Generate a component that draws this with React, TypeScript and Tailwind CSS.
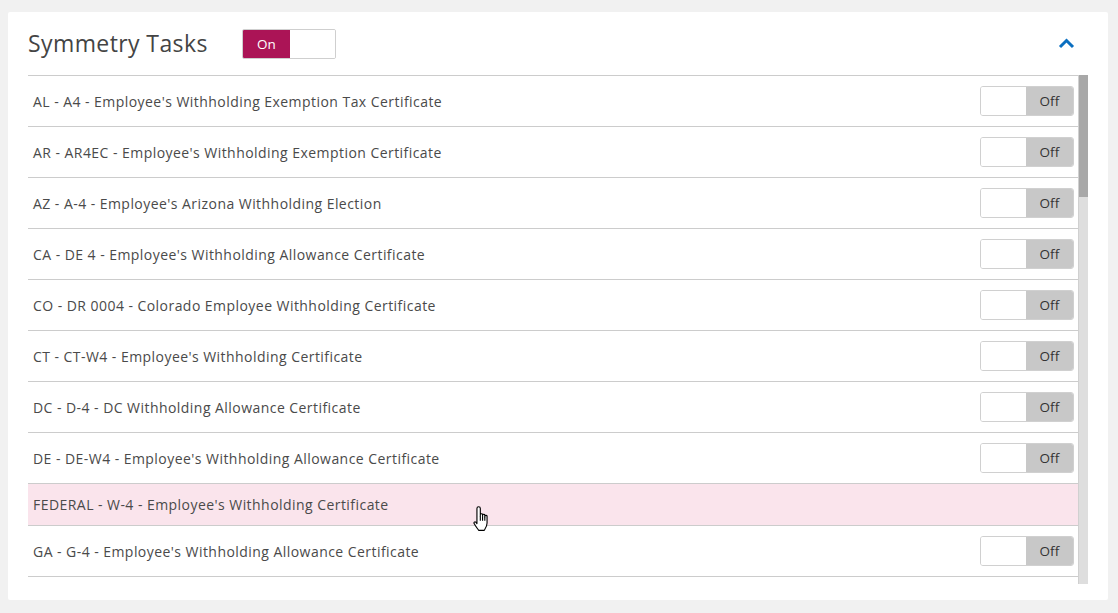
import React from "react";

const rows: { label: string; toggle: boolean; highlight?: boolean }[] = [
  { label: "AL - A4 - Employee's Withholding Exemption Tax Certificate", toggle: true },
  { label: "AR - AR4EC - Employee's Withholding Exemption Certificate", toggle: true },
  { label: "AZ - A-4 - Employee's Arizona Withholding Election", toggle: true },
  { label: "CA - DE 4 - Employee's Withholding Allowance Certificate", toggle: true },
  { label: "CO - DR 0004 - Colorado Employee Withholding Certificate", toggle: true },
  { label: "CT - CT-W4 - Employee's Withholding Certificate", toggle: true },
  { label: "DC - D-4 - DC Withholding Allowance Certificate", toggle: true },
  { label: "DE - DE-W4 - Employee's Withholding Allowance Certificate", toggle: true },
  { label: "FEDERAL - W-4 - Employee's Withholding Certificate", toggle: false, highlight: true },
  { label: "GA - G-4 - Employee's Withholding Allowance Certificate", toggle: true },
];

function OffToggle() {
  return (
    <div className="flex h-[30px] w-[94px] overflow-hidden rounded-[3px] border border-[#d0d0d0]">
      <div className="w-[45px] bg-white" />
      <div className="flex flex-1 items-center justify-center bg-[#c8c8c8] pt-[1px] text-[13.5px] tracking-[0.2px] text-[#333]">Off</div>
    </div>
  );
}

export default function App() {
  return (
    <div
      className="relative min-h-screen w-full bg-[#f1f1f1] pt-[12px]"
      style={{ fontFamily: '"Open Sans", "Noto Sans", sans-serif' }}
    >
      <div className="ml-[8px] h-[588px] w-[1100px] rounded-[2px] bg-white px-[20px]">
        <div className="flex h-[63px] items-center">
          <div className="w-[214px] text-[23px] leading-none tracking-[0.4px] text-[#444]">Symmetry Tasks</div>
          <div className="flex h-[30px] w-[94px] overflow-hidden rounded-[2px] border border-[#cfcfcf]">
            <div className="flex w-[47px] items-center justify-center bg-[#ab1456] pt-[1px] text-[13.5px] tracking-[0.2px] text-white">On</div>
            <div className="flex-1 bg-white" />
          </div>
          <div className="ml-auto mr-[13px]">
            <svg width="17" height="11" viewBox="0 0 17 11">
              <path d="M2 9 L8.5 2.5 L15 9" fill="none" stroke="#0b6fc0" strokeWidth="3" />
            </svg>
          </div>
        </div>
        <div className="flex h-[509px]">
          <div className="w-[1050px] overflow-hidden border-t border-[#cccccc]">
            {rows.map((r, i) => (
              <div
                key={i}
                className={`flex items-center border-b border-[#cccccc] pl-[5px] pr-[4px] text-[14px] tracking-[0.45px] text-[#4a4a4a] ${
                  r.highlight ? "h-[42px] bg-[#fae4ec]" : "h-[51px] bg-white"
                }`}
              >
                <span>{r.label}</span>
                <div className="ml-auto">{r.toggle && <OffToggle />}</div>
              </div>
            ))}
          </div>
          <div className="w-[10px] border-l border-[#d0d0d0] bg-[#dedede]">
            <div className="h-[122px] bg-[#a8a8a8]" />
          </div>
        </div>
      </div>
      <svg
        className="absolute left-[473px] top-[505px]"
        width="18"
        height="27"
        viewBox="0 0 16 24"
      >
        <path
          d="M5 1.5 C5.8 1.5 6.5 2 6.5 3 L6.5 10 L6.5 8.5 C6.5 7.5 8.5 7.5 8.5 8.5 L8.5 10 L8.5 9 C8.5 8 10.5 8 10.5 9 L10.5 10.5 L10.5 10 C10.5 9 12.5 9 12.5 10 L12.5 16 C12.5 19 11 21 10 22.5 L5 22.5 C4 21 2 18.5 1 16.5 C0.5 15.5 1.5 14.5 2.5 15.2 L3.5 16.5 L3.5 3 C3.5 2 4.2 1.5 5 1.5 Z"
          fill="white"
          stroke="black"
          strokeWidth="1"
          strokeLinejoin="round"
        />
        <path d="M6.5 10 L6.5 14 M8.5 10 L8.5 14 M10.5 10.5 L10.5 14" stroke="black" strokeWidth="1" />
      </svg>
    </div>
  );
}
